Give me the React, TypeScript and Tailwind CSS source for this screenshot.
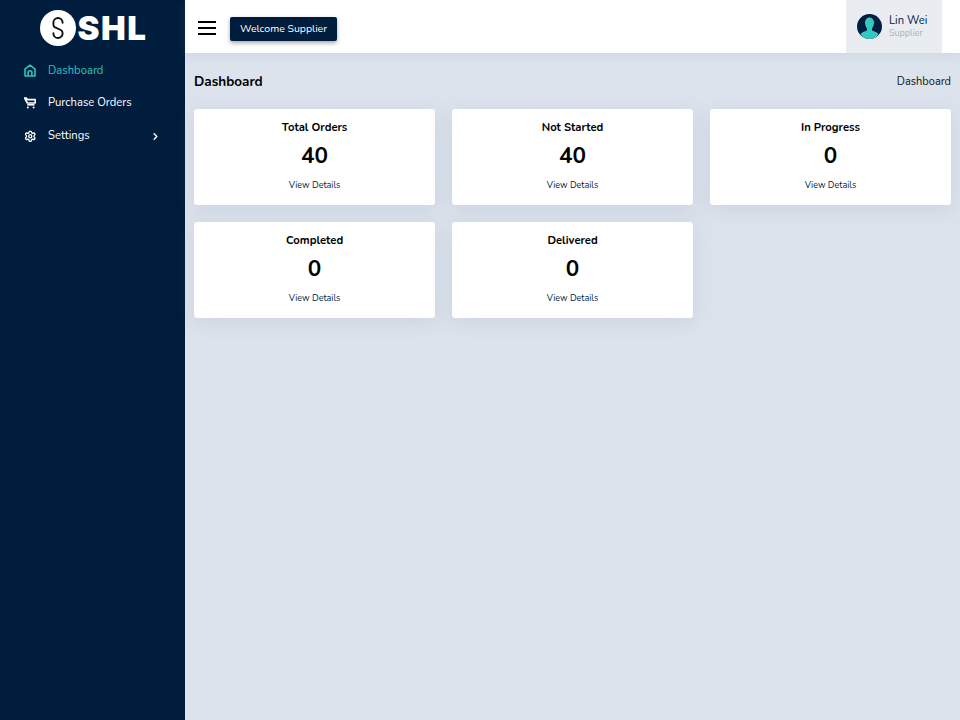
import React from "react";
import { ChevronRight, Settings } from "lucide-react";

const cards = [
  { title: "Total Orders", value: 40 },
  { title: "Not Started", value: 40 },
  { title: "In Progress", value: 0 },
  { title: "Completed", value: 0 },
  { title: "Delivered", value: 0 },
];

function Logo() {
  return (
    <svg width="36" height="36" viewBox="0 0 36 36">
      <circle cx="18" cy="18" r="18" fill="#fff" />
      <path
        d="M22.6 12.8 V12.6 a4.6 4.6 0 0 0 -9.2 0 V14.4 a3.4 3.4 0 0 0 1.8 3 L20.8 20 a3.4 3.4 0 0 1 1.8 3 V23.4 a4.6 4.6 0 0 1 -9.2 0 V23.2"
        fill="none"
        stroke="#111"
        strokeWidth="1.9"
        strokeLinecap="round"
      />
    </svg>
  );
}

function HomeIcon() {
  return (
    <svg className="-mt-[1px]" width="12" height="13" viewBox="0 0 12 13" fill="none" stroke="currentColor" strokeWidth="1.6">
      <path d="M1 12 V5.2 L6 1.2 L11 5.2 V12 Z" strokeLinejoin="round" />
      <path d="M4.1 12 V8.6 a1.9 1.9 0 0 1 3.8 0 V12" />
    </svg>
  );
}

function CartIcon() {
  return (
    <svg className="-mt-[1px]" width="12" height="12" viewBox="0 0 12 12" fill="none" stroke="currentColor" strokeWidth="1.6">
      <path d="M0.5 1 H2.5 L3.3 2.6 H11.2 V6 H3.3 Z" strokeLinejoin="round" />
      <path d="M3.3 7.8 H10.5" />
      <circle cx="3.8" cy="10.6" r="1" fill="currentColor" stroke="none" />
      <circle cx="9.6" cy="10.6" r="1" fill="currentColor" stroke="none" />
    </svg>
  );
}

function Avatar() {
  return (
    <svg width="25" height="25" viewBox="0 0 25 25">
      <circle cx="12.5" cy="12.5" r="12.5" fill="#001f3f" />
      <path
        d="M3.5 20.5 C4.5 18 8 17.5 10 16.5 V14.5 C8.5 12.5 8 10 8 8.5 C8 5.5 10 3.5 12.5 3.5 C15 3.5 17 5.5 17 8.5 C17 10 16.5 12.5 15 14.5 V16.5 C17 17.5 20.5 18 21.5 20.5 C19 23.5 15.5 25 12.5 25 C9.5 25 6 23.5 3.5 20.5 Z"
        fill="#36c9c4"
      />
    </svg>
  );
}

export default function App() {
  return (
    <div className="flex min-h-[720px] bg-[#dce3ec] font-['Nunito','Lato','Open_Sans',sans-serif] text-black">
      <aside className="w-[185px] shrink-0 bg-[#001d3d] text-white">
        <div className="flex h-[54px] items-center justify-center gap-[2px] pt-[2px] pl-[2px]">
          <Logo />
          <span className="font-['Inter',sans-serif] text-[33px] leading-none font-black tracking-[1.5px]">SHL</span>
        </div>
        <nav className="text-[11.25px]">
          <div className="flex h-[33px] items-center pl-[24px] text-[#2fc4bd]">
            <HomeIcon />
            <span className="mt-[1px] ml-[12px]">Dashboard</span>
          </div>
          <div className="flex h-[33px] items-center pl-[24px]">
            <CartIcon />
            <span className="ml-[12px]">Purchase Orders</span>
          </div>
          <div className="flex h-[33px] items-center pl-[24px]">
            <Settings className="-mt-[1px] h-[12.5px] w-[12.5px]" strokeWidth={2.5} />
            <span className="ml-[11.5px]">Settings</span>
            <ChevronRight className="mr-[24px] ml-auto h-[11px] w-[11px]" strokeWidth={3} />
          </div>
        </nav>
      </aside>

      <div className="flex-1">
        <header className="flex h-[53px] items-center bg-white pr-[18px] pl-[13px] shadow-[0_2px_10px_rgba(120,140,170,0.15)]">
          <div className="mt-[3px] flex w-[18px] flex-col gap-[4px]">
            <span className="h-[2px] bg-black" />
            <span className="h-[2px] bg-black" />
            <span className="h-[2px] bg-black" />
          </div>
          <div className="mt-[4px] ml-[14px] flex h-[24px] w-[107px] items-center justify-center rounded-[2px] bg-[#001d3d] text-[10.5px] text-white shadow-[0_2px_4px_rgba(0,0,0,0.35)]">
            Welcome Supplier
          </div>
          <div className="ml-auto flex h-full w-[96px] items-center gap-[7px] bg-[#e9ecf0] pl-[11px]">
            <Avatar />
            <div className="-mt-[2px]">
              <div className="text-[11.25px] leading-[15px] text-[#001d3d]">Lin Wei</div>
              <div className="text-[9px] leading-[11px] text-[#a9b3bf]">Supplier</div>
            </div>
          </div>
        </header>

        <main className="px-[9px]">
          <div className="flex h-[56px] items-center justify-between pt-[2px]">
            <h1 className="text-[13.5px] font-bold">Dashboard</h1>
            <span className="text-[11px] text-[#111]">Dashboard</span>
          </div>
          <div className="mr-[0.3px] ml-[0.4px] grid grid-cols-3 gap-x-[17.5px] gap-y-[17px]">
            {cards.map((card) => (
              <div
                key={card.title}
                className="flex h-[96px] flex-col items-center rounded-[3px] bg-white pt-[11px] shadow-[0_4px_20px_rgba(120,140,170,0.18)]"
              >
                <div className="text-[11.25px] leading-[16px] font-bold">{card.title}</div>
                <div className="mt-[6px] text-[22.5px] leading-[28px] font-bold">{card.value}</div>
                <div className="mt-[8px] text-[9px] leading-[14px] text-[#001d3d]">View Details</div>
              </div>
            ))}
          </div>
        </main>
      </div>
    </div>
  );
}
